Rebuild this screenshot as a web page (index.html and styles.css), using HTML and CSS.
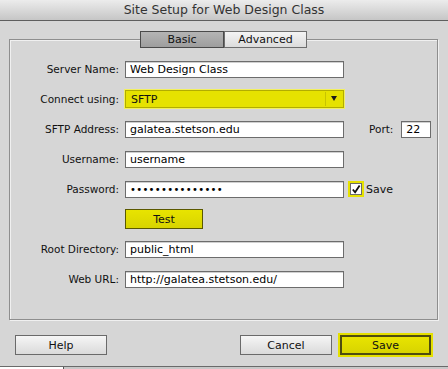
FILE: index.html
```html
<!DOCTYPE html>
<html lang="en">
  <head>
    <meta charset="UTF-8" />
    <title>Site Setup for Web Design Class</title>
    <link rel="stylesheet" href="styles.css">
  </head>
  <body>
    <div class="window">
      <div class="titlebar">Site Setup for Web Design Class</div>

      <div class="content">
        <div class="group">
          <div class="tabs">
            <button class="tab tab-active">Basic</button>
            <button class="tab">Advanced</button>
          </div>

          <div class="form">
            <div class="row">
              <label class="label">Server Name:</label>
              <input class="field" type="text" value="Web Design Class" />
            </div>
            <div class="row">
              <label class="label">Connect using:</label>
              <div class="select">
                <span class="select-value">SFTP</span>
                <span class="select-arrow"></span>
              </div>
            </div>
            <div class="row">
              <label class="label">SFTP Address:</label>
              <input class="field" type="text" value="galatea.stetson.edu" />
              <label class="label port-label">Port:</label>
              <input class="field port" type="text" value="22" />
            </div>
            <div class="row">
              <label class="label">Username:</label>
              <input class="field" type="text" value="username" />
            </div>
            <div class="row">
              <label class="label">Password:</label>
              <input class="field dots" type="text" value="&#8226;&#8226;&#8226;&#8226;&#8226;&#8226;&#8226;&#8226;&#8226;&#8226;&#8226;&#8226;&#8226;&#8226;&#8226;" />
              <span class="check">
                <svg width="11" height="11" viewBox="0 0 11 11">
                  <path d="M2 5.5 L4.5 8.5 L9.5 1" fill="none" stroke="#111" stroke-width="2" />
                </svg>
              </span>
              <span class="check-text">Save</span>
            </div>
            <div class="row">
              <span class="label"></span>
              <button class="btn btn-yellow test-btn">Test</button>
            </div>
            <div class="row">
              <label class="label">Root Directory:</label>
              <input class="field" type="text" value="public_html" />
            </div>
            <div class="row">
              <label class="label">Web URL:</label>
              <input class="field" type="text" value="http://galatea.stetson.edu/" />
            </div>
          </div>
        </div>

        <div class="actions">
          <button class="btn">Help</button>
          <div class="actions-right">
            <button class="btn">Cancel</button>
            <button class="btn btn-yellow btn-default">Save</button>
          </div>
        </div>
      </div>

      <div class="dock">
        <div class="dock-tab"></div>
      </div>
    </div>
  </body>
</html>
```

FILE: styles.css
```css
* {
  margin: 0;
  padding: 0;
  box-sizing: border-box;
}
body {
  width: 448px;
  height: 369px;
  overflow: hidden;
  background: #d6d6d6;
  font-family: "DejaVu Sans", "Liberation Sans", sans-serif;
  font-size: 10.5px;
  color: #111;
}
.window {
  display: flex;
  flex-direction: column;
  height: 369px;
}
.titlebar {
  height: 21px;
  line-height: 20px;
  text-align: center;
  font-size: 12.5px;
  color: #333;
  background: linear-gradient(#ececec, #c6c6c6);
  border-bottom: 1px solid #5e5e5e;
}
.content {
  flex: 1;
  padding: 18px 10px 0 9px;
}

/* group box with tabs sitting on the top line */
.group {
  border: 1px solid #8e8e8e;
  box-shadow: 1px 1px 0 #f0f0f0, inset 1px 1px 0 #f0f0f0;
  padding-bottom: 24px;
  height: 281px;
}
.tabs {
  display: flex;
  justify-content: center;
  margin-top: -9px;
}
.tab {
  width: 84px;
  height: 17px;
  font-family: inherit;
  font-size: 11px;
  color: #111;
  border: 1px solid #6e6e6e;
  background: linear-gradient(#f4f4f4, #dcdcdc);
}
.tab + .tab {
  width: 83px;
}
.tab-active {
  border-color: #4a4a4a;
  background: linear-gradient(#b4b4b4, #9e9e9e);
}

.form {
  margin-top: 6px;
}
.row {
  display: flex;
  align-items: center;
  height: 30px;
}
.label {
  width: 109px;
  margin-right: 6px;
  text-align: right;
}
.field {
  width: 219px;
  height: 17px;
  padding: 0 4px;
  font-family: inherit;
  font-size: 11px;
  color: #000;
  background: #fff;
  border: 1px solid #6c6c6c;
  box-shadow: inset 0 1px 0 #d0d0d0;
  outline: none;
}
.dots {
  font-size: 10px;
  letter-spacing: 0.3px;
}
.port-label {
  width: auto;
  margin-left: 25px;
  margin-right: 8px;
}
.port {
  width: 30px;
}

.select {
  display: flex;
  align-items: center;
  width: 219px;
  height: 18px;
  background: #e6e200;
  border: 1px solid #b2ad00;
  box-shadow: 0 0 0 1px #f2ef60;
}
.select-value {
  flex: 1;
  padding-left: 5px;
  font-size: 11px;
}
.select-arrow {
  position: relative;
  width: 18px;
  height: 14px;
  border-left: 1px solid #c8c400;
}
.select-arrow::after {
  content: "";
  position: absolute;
  left: 5px;
  top: 4px;
  border-left: 3.5px solid transparent;
  border-right: 3.5px solid transparent;
  border-top: 5px solid #1a1a1a;
}

.check {
  display: flex;
  align-items: center;
  justify-content: center;
  width: 12px;
  height: 12px;
  margin-left: 6px;
  background: #fff;
  border: 1px solid #6c6c6c;
  box-shadow: 0 0 0 2px #e6e200;
}
.check-text {
  margin-left: 4px;
  font-size: 11px;
}

.btn {
  width: 92px;
  height: 20px;
  font-family: inherit;
  font-size: 11px;
  color: #111;
  border: 1px solid #6a6a6a;
  background: linear-gradient(#f6f6f6, #dadada);
}
.btn-yellow {
  border-color: #5a5800;
  background: linear-gradient(#e8e400, #d8d400);
}
.test-btn {
  width: 78px;
}
.btn-default {
  width: 91px;
  border-width: 2px;
  border-color: #4e4c10;
  box-shadow: 0 0 0 2px #e4e000;
}

.actions {
  display: flex;
  justify-content: space-between;
  margin-top: 15px;
  padding: 0 7px 0 6px;
}
.actions-right {
  display: flex;
  gap: 8px;
}

.dock {
  height: 3px;
  border-top: 1px solid #6a6a6a;
  background: #c8c8c8;
}
.dock-tab {
  width: 64px;
  height: 3px;
  background: #fff;
  border-right: 1px solid #555;
}
```
